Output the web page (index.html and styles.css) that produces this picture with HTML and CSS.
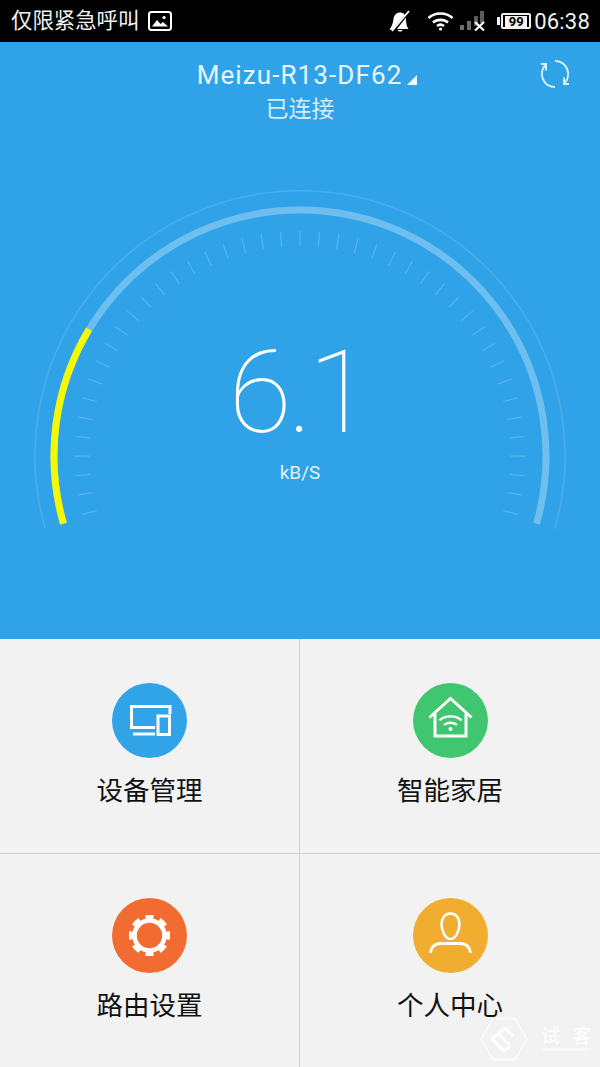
FILE: index.html
```html
<!DOCTYPE html>
<html lang="zh-CN">
<head>
   <meta charset="UTF-8">
   <meta name="viewport" content="width=device-width, initial-scale=1.0">
   <title>路由器</title>
   <link rel="stylesheet" href="styles.css">
</head>
<body>
   <div class="statusbar">
       <div class="status-left">
           <span class="carrier">仅限紧急呼叫</span>
           <svg class="ic-photo" width="24" height="20" viewBox="0 0 24 20">
               <rect x="1" y="1" width="22" height="18" rx="2.5" fill="#000" stroke="#fff" stroke-width="2"/>
               <path d="M4 15.5 L9 9 L12.5 13 L15 11 L20 15.5 Z" fill="#fff"/>
               <circle cx="16" cy="6.5" r="1.6" fill="#fff"/>
           </svg>
       </div>
       <div class="status-right">
           <svg class="ic-bell" width="21" height="22" viewBox="0 0 21 22">
               <path d="M0.5 19.5 C3 16 4 13 4.5 9 C5 5 7.5 2.5 11 2.5 C13 2.5 14.5 3.4 15.8 4.8 L3 20 Z" fill="#fff"/>
               <path d="M17 7.5 C17 13 17.5 16 19.5 19 H8 Z M8.5 20 H13.5 C13 22 9.5 22 8.5 20 Z" fill="#fff"/>
               <path d="M3 21 L20 1" stroke="#fff" stroke-width="1.8"/>
           </svg>
           <svg class="ic-wifi" width="27" height="20" viewBox="0 0 27 20" fill="none" stroke="#fff" stroke-width="2.6">
               <path d="M1.5 7 C8 1 19 1 25.5 7"/>
               <path d="M6 11.5 C10 8 17 8 21 11.5"/>
               <path d="M10 15 C12 13.5 15 13.5 17 15"/>
               <circle cx="13.5" cy="18" r="1.6" fill="#fff" stroke="none"/>
           </svg>
           <svg class="ic-signal" width="25" height="20" viewBox="0 0 25 20">
               <rect x="0" y="14" width="4" height="5" fill="#6c6c6c"/>
               <rect x="7" y="10" width="4" height="9" fill="#6c6c6c"/>
               <rect x="14" y="5" width="4" height="10" fill="#5c5c5c"/>
               <rect x="20" y="0" width="4" height="12" fill="#5c5c5c"/>
               <path d="M15 11 L24 19.5 M24 11 L15 19.5" stroke="#fff" stroke-width="2.2"/>
           </svg>
           <div class="battery"><span>99</span></div>
           <span class="clock">06:38</span>
       </div>
   </div>

   <div class="hero">
       <div class="hero-head">
           <div class="ssid-row">
               <span class="ssid">Meizu-R13-DF62</span>
               <span class="ssid-arrow"></span>
           </div>
           <div class="ssid-state">已连接</div>
           <svg class="ic-refresh" width="32" height="30" viewBox="0 0 32 30" fill="none" stroke="#d9effc" stroke-width="2">
               <path d="M15 2 A13 13 0 0 1 24 24.5"/>
               <path d="M15 28 A13 13 0 0 1 6 5.5"/>
               <path d="M24 18.5 V25 H29"/>
               <path d="M6 11.5 V5 H1"/>
           </svg>
       </div>

       <div class="gauge">
           <svg class="gauge-dial" width="600" height="511" viewBox="0 128 600 511" fill="none">
               <path class="dial-outer" d="M45.3 529 A265 265 0 1 1 554.7 529"/>
               <!-- 43 ticks, one every 5 degrees -->
               <path class="dial-ticks" pathLength="212" d="M90.4 516.1 A218 218 0 1 1 509.6 516.1"/>
               <path class="dial-track" d="M63.5 523.8 A246 246 0 1 1 536.5 523.8"/>
               <path class="dial-value" d="M63.5 523.8 A246 246 0 0 1 89.1 329.3"/>
           </svg>
           <div class="gauge-read">
               <div class="speed">6.1</div>
               <div class="unit">kB/S</div>
           </div>
       </div>
   </div>

   <div class="menu">
       <div class="menu-item">
           <svg class="menu-icon" width="75" height="75" viewBox="0 0 75 75" fill="none">
               <circle cx="37.5" cy="37.5" r="37.5" fill="#31a4e8"/>
               <path d="M58 31 V23.5 H19.5 V44.5 H43" stroke="#fff" stroke-width="3"/>
               <path d="M21 51 H43" stroke="#fff" stroke-width="3"/>
               <rect x="46" y="33" width="11.5" height="18.5" stroke="#fff" stroke-width="3"/>
           </svg>
           <span class="menu-label">设备管理</span>
       </div>
       <div class="menu-item">
           <svg class="menu-icon" width="75" height="75" viewBox="0 0 75 75" fill="none">
               <circle cx="37.5" cy="37.5" r="37.5" fill="#40c570"/>
               <path d="M16.5 34.5 L37.5 15.5 L58.5 34.5 M22 30.5 V53 H53 V30.5" stroke="#fff" stroke-width="3"/>
               <path d="M26.5 37.5 C32 32 43 32 48.5 37.5" stroke="#fff" stroke-width="2.4"/>
               <path d="M31 42 C34 39 41 39 44 42" stroke="#fff" stroke-width="2.4"/>
               <circle cx="37.5" cy="46" r="2" fill="#fff"/>
           </svg>
           <span class="menu-label">智能家居</span>
       </div>
       <div class="menu-item">
           <svg class="menu-icon" width="75" height="75" viewBox="0 0 75 75" fill="none">
               <circle cx="37.5" cy="37.5" r="37.5" fill="#f26c31"/>
               <circle cx="37.5" cy="37.5" r="15" stroke="#fff" stroke-width="4.6"/>
               <circle class="gear-teeth" cx="37.5" cy="37.5" r="18.6" pathLength="8" stroke="#fff" stroke-width="4"/>
           </svg>
           <span class="menu-label">路由设置</span>
       </div>
       <div class="menu-item">
           <svg class="menu-icon" width="75" height="75" viewBox="0 0 75 75" fill="none">
               <circle cx="37.5" cy="37.5" r="37.5" fill="#f0ad30"/>
               <path d="M37.5 15.5 C43 15.5 46.5 20 46.5 26 C46.5 32 43 41 37.5 41 C32 41 28.5 32 28.5 26 C28.5 20 32 15.5 37.5 15.5 Z" stroke="#fff" stroke-width="2.6"/>
               <path d="M17.5 55 C18 49 21 46 27 45.5 H48 C54 46 57 49 57.5 55" stroke="#fff" stroke-width="2.8"/>
           </svg>
           <span class="menu-label">个人中心</span>
       </div>
   </div>

   <!-- site stamp over the bottom corner -->
   <div class="stamp">
       <svg width="48" height="44" viewBox="0 0 48 44" fill="none" stroke="#fff" stroke-opacity="0.8" stroke-linejoin="round">
           <path d="M13 1.5 H35 L46.5 22 L35 42.5 H13 L1.5 22 Z" stroke-width="1.5"/>
           <path d="M33 19 L25 11 L12 22 L24 34 L30 29" stroke-width="3.5"/>
           <path d="M18 17 L30 28" stroke-width="3"/>
       </svg>
       <span class="stamp-text">试 客</span>
   </div>
</body>
</html>
```

FILE: styles.css
```css
* { margin: 0; padding: 0; box-sizing: border-box; }
html, body {
    width: 600px; height: 1067px; overflow: hidden;
    background-color: #f2f2f2;
    font-family: 'Roboto', 'Noto Sans CJK SC', sans-serif;
}
body { position: relative; display: flex; flex-direction: column; }
svg { display: block; }

/* status bar */
.statusbar {
    height: 42px; background: #000; color: #f2f2f2;
    display: flex; align-items: center; justify-content: space-between;
    padding: 0 10px 0 11px;
}
.status-left { display: flex; align-items: center; gap: 9px; }
.carrier {
    font-size: 21.4px; line-height: 38px; padding-bottom: 4px;
    font-family: 'Noto Sans CJK SC', sans-serif;
}
.status-right { display: flex; align-items: center; }
.ic-bell { margin-right: 17px; }
.ic-wifi { margin-right: 6px; }
.ic-signal { margin-right: 16px; }
.battery {
    width: 30px; height: 16px; border: 2px solid #f2f2f2; border-radius: 2px;
    padding: 0 2px; position: relative; margin-right: 3px;
}
.battery::before {
    content: ""; position: absolute; left: -6px; top: 2px;
    width: 3px; height: 8px; background: #f2f2f2;
}
.battery span {
    display: block; height: 11px; margin-top: 0.5px; background: #f2f2f2; color: #000;
    font-size: 13px; font-weight: 700; line-height: 11px; text-align: center;
}
.clock { font-size: 22px; letter-spacing: 0.2px; }

/* blue panel */
.hero { height: 597px; background: #30a3e8; color: #fff; display: flex; flex-direction: column; }
.hero-head { height: 86px; position: relative; padding-top: 16px; text-align: center; }
.ssid-row { display: flex; justify-content: center; align-items: flex-end; gap: 5px; padding-left: 14px; height: 34px; }
.ssid { font-size: 26px; line-height: 34px; color: #e9f5fd; letter-spacing: 1.1px; }
.ssid-arrow {
    width: 0; height: 0; margin-bottom: 7px;
    border-style: solid; border-width: 0 0 10px 10px;
    border-color: transparent transparent #f2f9fe transparent;
}
.ssid-state {
    font-size: 23px; line-height: 30px; color: #d4ecfb;
    font-family: 'Noto Sans CJK SC', sans-serif;
}
.ic-refresh { position: absolute; left: 540px; top: 17px; }

/* speed gauge */
.gauge { flex: 1; display: grid; }
.gauge > * { grid-area: 1 / 1; }
.dial-outer { stroke: rgba(255, 255, 255, 0.12); stroke-width: 1.5; }
.dial-ticks {
    stroke: rgba(255, 255, 255, 0.19); stroke-width: 15;
    stroke-dasharray: 0.32 4.68; stroke-dashoffset: -0.84;
}
.dial-track { stroke: rgba(255, 255, 255, 0.3); stroke-width: 7; }
.dial-value { stroke: #f5f900; stroke-width: 7; }
.gauge-read { text-align: center; padding-top: 195px; }
.speed { font-size: 115px; font-weight: 100; line-height: 140px; letter-spacing: -4px; padding-right: 4px; }
.unit { font-size: 19px; line-height: 24px; color: #e0f1fc; margin-top: -2px; }

/* four entries */
.menu { flex: 1; display: grid; grid-template-columns: 300px 300px; grid-template-rows: 215px 213px; }
.menu-item {
    display: flex; flex-direction: column; align-items: center;
    padding-top: 44px; gap: 12px;
    border-bottom: 1px solid #cfcfcf;
}
.menu-item:nth-child(odd) { border-right: 1px solid #cfcfcf; }
.menu-item:nth-child(n+3) { border-bottom: none; }
.menu-label {
    font-family: 'Noto Sans CJK SC', sans-serif;
    font-size: 26.5px; line-height: 38px; color: #111;
}
.gear-teeth { stroke-dasharray: 0.56 0.44; stroke-dashoffset: 0.28; }

/* corner stamp */
.stamp {
    position: absolute; left: 480px; top: 1017px;
    display: flex; align-items: flex-start; gap: 13px;
}
.stamp-text {
    font-family: 'Noto Sans CJK SC', sans-serif;
    font-size: 19px; font-weight: 500; color: rgba(255, 255, 255, 0.9);
    word-spacing: 8px; white-space: nowrap;
    line-height: 26px; margin-top: 5px;
    border-bottom: 3px solid rgba(255, 255, 255, 0.4);
}
```
